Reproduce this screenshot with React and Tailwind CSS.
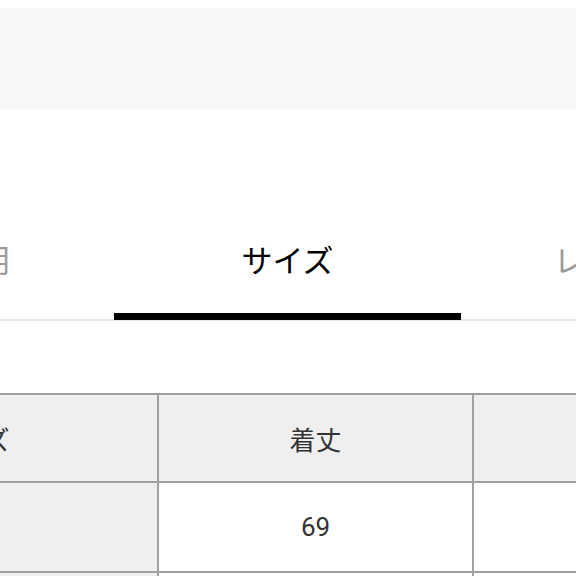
import React from 'react';

const jp = { fontFamily: '"Noto Sans CJK JP", "Noto Sans", sans-serif' };

const tabs = [
  { label: '商品説明', active: false, shift: 'ml-[14px]' },
  { label: 'サイズ', active: true, shift: '' },
  { label: 'レビュー', active: false, shift: 'mr-[38px]' },
];

const rows = [
  { head: true, cells: ['サイズ', '着丈', '身幅'] },
  { head: false, cells: ['M', '69', '58'] },
  { head: false, cells: ['L', '71', '61'] },
];

function Cell({ children, gray }) {
  return (
    <div
      className={`flex items-center justify-center border-r-2 border-b-2 border-[#a0a0a0] text-[26px] text-[#333] ${
        gray ? 'bg-[#efefef]' : 'bg-white'
      }`}
    >
      {children}
    </div>
  );
}

export default function App() {
  return (
    <div className="w-[576px] h-[576px] overflow-hidden bg-white" style={jp}>
      {/* top banner */}
      <div className="h-[8px]" />
      <div className="h-[102px] bg-[#f8f8f8]" />
      <div className="h-[95px]" />

      {/* tab bar */}
      <div className="flex items-start border-b-2 border-[#e8e8e8]">
        <div className="flex shrink-0 ml-[-233px]">
          {tabs.map((t) =>
            t.active ? (
              <div
                key={t.label}
                className="w-[347px] h-[115px] -mb-px flex items-center justify-center border-b-[7px] border-black text-[31px] text-black"
              >
                {t.label}
              </div>
            ) : (
              <div
                key={t.label}
                className="w-[347px] h-[108px] flex items-center justify-center text-[31px] text-[#9a9a9a]"
              >
                <span className={t.shift}>{t.label}</span>
              </div>
            )
          )}
        </div>
      </div>

      <div className="h-[72px]" />

      {/* size table */}
      <div className="ml-[-215px] w-[1004px] grid grid-cols-[374px_315px_315px] border-t-2 border-[#a0a0a0]">
        {rows.map((r, i) =>
          r.cells.map((c, j) => (
            <div key={`${i}-${j}`} className={i === 0 ? 'h-[88px] grid' : 'h-[90px] grid'}>
              <Cell gray={r.head || j === 0}>
                <span style={!r.head ? { fontFamily: 'Roboto, sans-serif' } : undefined}>{c}</span>
              </Cell>
            </div>
          ))
        )}
      </div>
    </div>
  );
}
